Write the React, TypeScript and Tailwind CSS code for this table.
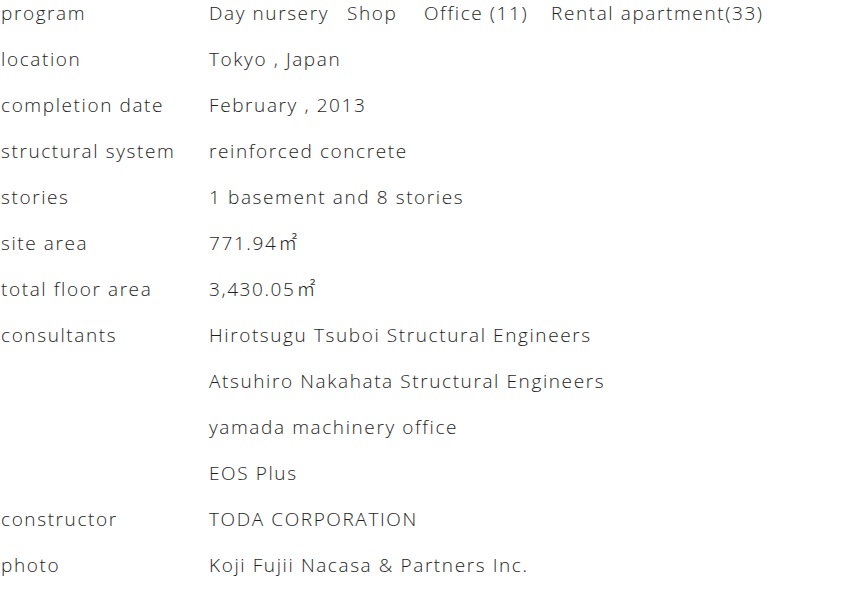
import React from "react";

const rows: [string, React.ReactNode][] = [
  ["program", null],
  ["location", "Tokyo , Japan"],
  ["completion date", "February , 2013"],
  ["structural system", "reinforced concrete"],
  ["stories", "1 basement and 8 stories"],
  ["site area", <>771.94<span className="ml-[1px]">㎡</span></>],
  ["total floor area", <>3,430.05<span className="ml-[1px]">㎡</span></>],
  ["consultants", "Hirotsugu Tsuboi Structural Engineers"],
  ["", "Atsuhiro Nakahata Structural Engineers"],
  ["", "yamada machinery office"],
  ["", "EOS Plus"],
  ["constructor", "TODA CORPORATION"],
  ["photo", "Koji Fujii Nacasa & Partners Inc."],
];

export default function App() {
  return (
    <div
      className="w-[860px] h-[590px] bg-white text-[#1e1e1e] text-[19px] font-light tracking-[1.6px] overflow-hidden"
      style={{ fontFamily: '"Open Sans", "Noto Sans CJK JP", sans-serif' }}
    >
      {rows.map(([label, value], i) => (
        <div key={i} className="flex h-[46px] leading-[26px]">
          <div className="w-[209px] shrink-0 pl-px">{label}</div>
          <div className="whitespace-nowrap flex">
            {i === 0 ? (
              <>
                <span className="w-[138px]">Day nursery</span>
                <span className="w-[77px]">Shop</span>
                <span className="w-[127px]">Office (11)</span>
                <span>Rental apartment(33)</span>
              </>
            ) : (
              value
            )}
          </div>
        </div>
      ))}
    </div>
  );
}
